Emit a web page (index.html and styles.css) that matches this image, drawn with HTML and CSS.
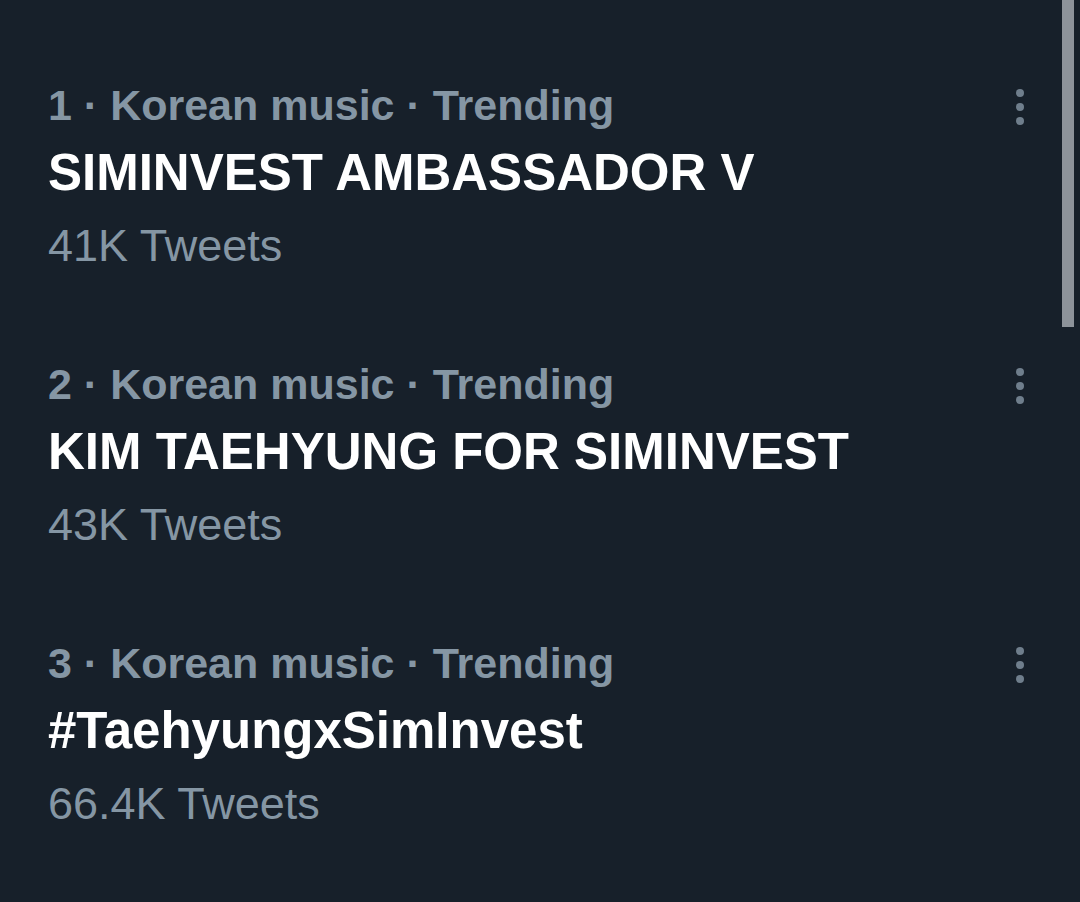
FILE: index.html
```html
<!DOCTYPE html>
<html>
<head>
<meta charset="utf-8">
<link rel="stylesheet" href="styles.css">
</head>
<body>
<div class="list">
  <div class="trend">
    <div class="info">
      <div class="meta">1 · Korean music · Trending</div>
      <div class="title">SIMINVEST AMBASSADOR V</div>
      <div class="count">41K Tweets</div>
    </div>
    <div class="more"><span></span><span></span><span></span></div>
  </div>
  <div class="trend">
    <div class="info">
      <div class="meta">2 · Korean music · Trending</div>
      <div class="title">KIM TAEHYUNG FOR SIMINVEST</div>
      <div class="count">43K Tweets</div>
    </div>
    <div class="more"><span></span><span></span><span></span></div>
  </div>
  <div class="trend">
    <div class="info">
      <div class="meta">3 · Korean music · Trending</div>
      <div class="title">#TaehyungxSimInvest</div>
      <div class="count">66.4K Tweets</div>
    </div>
    <div class="more"><span></span><span></span><span></span></div>
  </div>
</div>
<div class="scrollbar"></div>
</body>
</html>
```
FILE: styles.css
```css
html, body {
  margin: 0;
  padding: 0;
  background: #17202a;
  width: 1080px;
  height: 902px;
  overflow: hidden;
  font-family: "Liberation Sans", Arial, sans-serif;
}
.list {
  display: flex;
  flex-direction: column;
  padding-top: 75px;
  gap: 73px;
}
.trend {
  display: flex;
  align-items: flex-start;
  padding: 0 56px 0 48px;
}
.info {
  flex: 1;
  display: flex;
  flex-direction: column;
}
.meta {
  font-size: 43px;
  line-height: 60px;
  font-weight: 700;
  color: #8596a4;
}
.title {
  font-size: 51px;
  line-height: 76px;
  font-weight: 700;
  color: #ffffff;
}
.count {
  font-size: 45px;
  line-height: 70px;
  font-weight: 400;
  color: #8596a4;
}
.more {
  display: flex;
  flex-direction: column;
  gap: 6px;
  margin-top: 14px;
}
.more span {
  width: 8px;
  height: 8px;
  border-radius: 50%;
  background: #6f7e8c;
}
.scrollbar {
  position: absolute;
  top: 0;
  left: 1062px;
  width: 12px;
  height: 327px;
  background: #8d939a;
}
```
